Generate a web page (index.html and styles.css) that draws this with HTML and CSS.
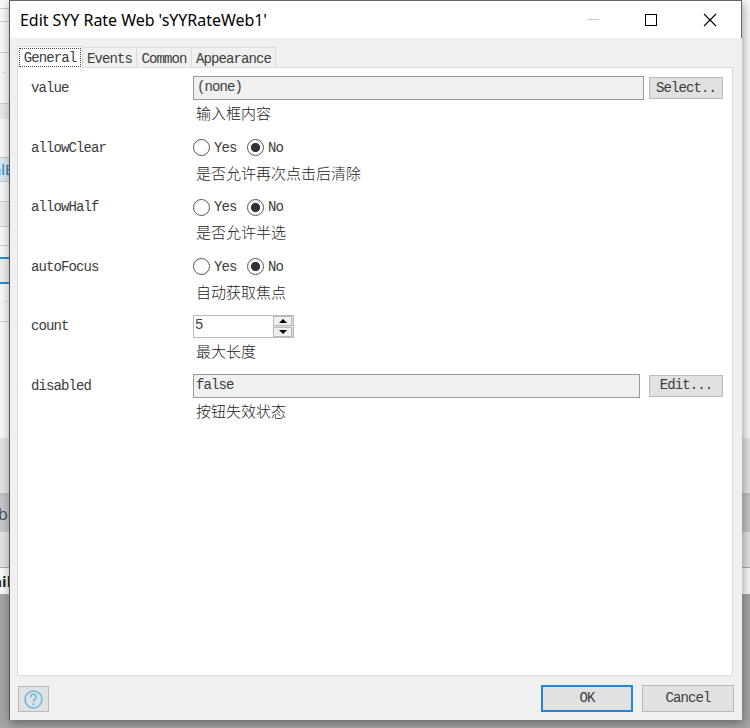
FILE: index.html
```
<!DOCTYPE html>
<html lang="zh-CN">
<head>
<meta charset="utf-8">
<title>Edit SYY Rate Web 'sYYRateWeb1'</title>
<link rel="stylesheet" href="styles.css">
</head>
<body>
<div class="backdrop">
  <div class="band b1"></div><div class="band b2"></div><div class="band b3"></div>
  <div class="band b4"></div><div class="band b5"></div>
  <div class="band b6"><span class="peek">alE</span></div>
  <div class="band b7"></div><div class="band b8"></div><div class="band b9"></div>
  <div class="band b10"></div><div class="band b11"></div><div class="band b12"></div>
  <div class="band b13"></div>
  <div class="band b14"><span class="peek">bu</span></div>
  <div class="band b15"></div>
  <div class="band b16"><span class="peek">ail</span></div>
  <div class="band b17"></div>
</div>
<main class="dialog">
  <header class="titlebar">
    <h1>Edit SYY Rate Web 'sYYRateWeb1'</h1>
    <svg class="controls" width="130" height="14" viewBox="0 0 130 14" fill="none" shape-rendering="crispEdges">
      <path d="M0 6.500H12" stroke="#ccc"/>
      <rect x="58.500" y="1.500" width="11" height="11" stroke="#000"/>
      <path d="M117 1l12 12M129 1l-12 12" stroke="#000" stroke-width="1.100" shape-rendering="auto"/>
    </svg>
  </header>
  <div class="body">
    <nav class="tabs">
      <div class="tab active"><span>General</span></div>
      <div class="tab t2">Events</div>
      <div class="tab t3">Common</div>
      <div class="tab t4">Appearance</div>
    </nav>
    <section class="panel">
      <div class="row">
        <div class="label">value</div>
        <div class="content">
          <div class="control"><div class="field value-field">(none)</div><div class="button small">Select..</div></div>
          <div class="hint">输入框内容</div>
        </div>
      </div>
      <div class="row">
        <div class="label">allowClear</div>
        <div class="content">
          <div class="control"><i class="radio"></i><span class="yes">Yes</span><i class="radio on"></i><span>No</span></div>
          <div class="hint">是否允许再次点击后清除</div>
        </div>
      </div>
      <div class="row">
        <div class="label">allowHalf</div>
        <div class="content">
          <div class="control"><i class="radio"></i><span class="yes">Yes</span><i class="radio on"></i><span>No</span></div>
          <div class="hint">是否允许半选</div>
        </div>
      </div>
      <div class="row">
        <div class="label">autoFocus</div>
        <div class="content">
          <div class="control"><i class="radio"></i><span class="yes">Yes</span><i class="radio on"></i><span>No</span></div>
          <div class="hint">自动获取焦点</div>
        </div>
      </div>
      <div class="row">
        <div class="label">count</div>
        <div class="content">
          <div class="control"><div class="spinner"><span>5</span>
            <div class="steps">
              <div class="step"><svg width="8" height="4"><path d="M0 4L4 0l4 4z"/></svg></div>
              <div class="step"><svg width="8" height="4"><path d="M0 0l4 4 4-4z"/></svg></div>
            </div></div></div>
          <div class="hint">最大长度</div>
        </div>
      </div>
      <div class="row">
        <div class="label">disabled</div>
        <div class="content">
          <div class="control"><div class="field disabled-field">false</div><div class="button small">Edit...</div></div>
          <div class="hint">按钮失效状态</div>
        </div>
      </div>
    </section>
    <footer class="footer">
      <div class="button help">
        <svg width="19" height="19" viewBox="0 0 19 19" fill="none" stroke="#62b8ed" stroke-width="1.500">
          <circle cx="9.500" cy="9.500" r="8.500"/>
          <path d="M6.700 7.300C6.700 3.300 12.500 3.500 12.300 7C12.200 9 9.500 9 9.500 11.800"/>
          <path d="M9.500 13.400v1.800" stroke-width="2"/>
        </svg>
      </div>
      <div class="button ok">OK</div>
      <div class="button cancel">Cancel</div>
    </footer>
  </div>
</main>
</body>
</html>
```

FILE: styles.css
```
* { box-sizing: border-box; }

body {
  margin: 0;
  width: 750px;
  height: 728px;
  overflow: hidden;
  position: relative;
  color: #3c3c3c;
  font: 14px/20px "Liberation Mono", "Noto Sans CJK SC", monospace;
  letter-spacing: -0.9px;
}

/* Application window behind the dialog */
.backdrop {
  height: 728px;
  display: flex;
  flex-direction: column;
  background: #f8f8f8;
}
.band { flex: none; width: 100%; }
.b1 { height: 9px; }
.b2 { height: 13px; }
.b3 { height: 31px; }
.b4 { height: 51px; background: linear-gradient(#ddd, #ddd) 2px 19px / 4px 1px no-repeat; }
.b1, .b2, .b3, .b4, .b7, .b9, .b11 {
  width: 10px;
  border-bottom: 1px solid #ccc;
}
.b5 { height: 15px; width: 10px; background: #e8e8e8; margin-bottom: 38px; }
.b6 { height: 25px; width: 10px; background: #d6eaf6; color: #2673c0; border: solid #ccc; border-width: 1px 0; }
.b7 { height: 20px; }
.b8 { height: 25px; width: 10px; background: #ececec; border-bottom: 1px solid #ccc; }
.b9 { height: 19px; }
.b10 { height: 27px; width: 10px; margin-top: 11px; background: #eee; border: solid #2191dc; border-width: 2px 0; }
.b11 { height: 38px; background: linear-gradient(#ddd, #ddd) 4px 17px / 4px 1px no-repeat; }
.b12 { height: 116px; }
.b13 { height: 55px; background: #e3e3e3; }
.b14 { height: 39px; background: #c5c7cc; border-top: 4px solid #bfc1c7; }
.b15 { height: 36px; background: #e3e3e3; border-bottom: 1px solid #aaa; }
.b16 { height: 26px; background: #fafafa; }
.b17 { height: 134px; background: #a5a5a5; }
.peek {
  display: block;
  width: 30px;
  margin-left: -7px;
  font: 15px/22px "Open Sans", sans-serif;
  letter-spacing: 0;
}
.b14 .peek { font-size: 16px; line-height: 35px; color: #444a56; margin-left: -2px; }
.b16 .peek { line-height: 26px; font-weight: 700; color: #222; margin-left: -7px; }

.dialog {
  position: absolute;
  left: 9px;
  top: 0;
  width: 733px;
  height: 720px;
  background: #f0f0f0;
  border-left: 1px solid #555;
  box-shadow: 1px 3px 10px rgba(0, 0, 0, .38);
}
.titlebar {
  width: 732px;
  height: 38px;
  display: flex;
  align-items: center;
  justify-content: space-between;
  padding: 1px 24px 0 10px;
  background: #fff;
  border-top: 1px solid #666;
  border-right: 1px solid #666;
}
.titlebar h1 {
  margin: 0;
  font: 400 16px/24px "Noto Sans", sans-serif;
  letter-spacing: -0.04px;
  color: #000;
  white-space: nowrap;
}
.controls { flex: none; }

.body { padding: 8px 8px 0 7px; }
.tabs {
  height: 21px;
  display: flex;
  align-items: flex-end;
}
.tab {
  height: 20px;
  padding-top: 1px;
  border: 1px solid #dcdcdc;
  border-left: 0;
  border-bottom: 0;
  text-align: center;
}
.tab.active {
  width: 66px;
  height: 22px;
  margin-bottom: -1px;
  padding: 1px;
  position: relative;
  background: #fff;
  border-left: 1px solid #dcdcdc;
}
.tab.active span { display: block; height: 19px; line-height: 18px; border: 1px dotted #444; }
.t2 { width: 54px; }
.t3 { width: 55px; }
.t4 { width: 84px; }

.panel {
  width: 716px;
  height: 609px;
  padding: 8px 0 0 13px;
  background: #fff;
  border: 1px solid #dcdcdc;
}
.row { display: flex; height: 59.5px; }
.label { width: 162px; padding-top: 2px; flex: none; }
.control { height: 24px; display: flex; align-items: center; }
.hint {
  margin-top: 3px;
  padding-left: 3px;
  font: 15px/20px "Noto Sans CJK SC", sans-serif;
  font-weight: 300;
  letter-spacing: 0;
  color: #222;
}
.field {
  height: 24px;
  padding: 0 3px;
  line-height: 21px;
  background: #f0f0f0;
  border: 1px solid #999;
}
.value-field { width: 451px; margin-right: 5px; }
.disabled-field { width: 447px; padding-left: 2px; margin-right: 9px; }
.button {
  display: flex;
  align-items: center;
  justify-content: center;
  background: #e1e1e1;
  border: 1px solid #bbb;
}
.small { width: 74px; height: 22px; padding-bottom: 1px; }
.radio {
  width: 17px;
  height: 17px;
  margin-right: 4px;
  border: 1px solid #555;
  border-radius: 50%;
}
.radio.on { background: radial-gradient(circle, #333 4.200px, #fff 4.900px); }
.yes { width: 33px; }
.spinner {
  width: 101px;
  height: 23px;
  display: flex;
  justify-content: space-between;
  padding-left: 1px;
  line-height: 18px;
  border: 1px solid #bbb;
}
.steps { width: 20px; padding: 0 1px 0 0; background: #ddd; }
.step {
  height: 10px;
  display: flex;
  align-items: center;
  justify-content: center;
  background: #f0f0f0;
  border: 1px solid #bbb;
}
.step + .step { margin-top: 1px; }

.footer { display: flex; padding: 9px 0 0 1px; }
.help { width: 31px; height: 26px; margin: 1px auto 0 0; }
.ok, .cancel { width: 92px; height: 27px; padding-bottom: 2px; }
.ok { border: 2px solid #2185d9; margin-right: 9px; }
```
